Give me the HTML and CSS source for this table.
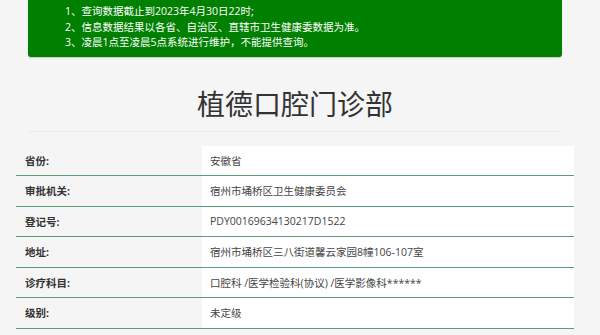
FILE: index.html
```html
<!DOCTYPE html>
<html lang="zh-CN">
<head>
<meta charset="utf-8">
<title>植德口腔门诊部</title>
<link rel="stylesheet" href="styles.css">
</head>
<body>
<div class="page">
  <div class="notice">
    <p>1、查询数据截止到2023年4月30日22时;</p>
    <p>2、信息数据结果以各省、自治区、直辖市卫生健康委数据为准。</p>
    <p>3、凌晨1点至凌晨5点系统进行维护，不能提供查询。</p>
  </div>
  <div class="title-wrap">
    <h1 class="title">植德口腔门诊部</h1>
  </div>
  <div class="info">
    <div class="row"><div class="label">省份:</div><div class="value">安徽省</div></div>
    <div class="row"><div class="label">审批机关:</div><div class="value">宿州市埇桥区卫生健康委员会</div></div>
    <div class="row"><div class="label">登记号:</div><div class="value">PDY00169634130217D1522</div></div>
    <div class="row"><div class="label">地址:</div><div class="value">宿州市埇桥区三八街道馨云家园8幢106-107室</div></div>
    <div class="row"><div class="label">诊疗科目:</div><div class="value">口腔科 /医学检验科(协议) /医学影像科******</div></div>
    <div class="row"><div class="label">级别:</div><div class="value">未定级</div></div>
  </div>
</div>
</body>
</html>
```
FILE: styles.css
```css
html, body {
  margin: 0;
  padding: 0;
  background: #f5f5f5;
  font-family: "Open Sans", "Noto Sans CJK SC", sans-serif;
  color: #333;
  overflow: hidden;
}
.page {
  width: 590px;
  height: 335px;
}
.notice {
  margin: 0 28px;
  background: #008000;
  color: #fff;
  padding: 4px 0 6px 37px;
  border-radius: 0 0 3px 3px;
  box-shadow: 0 1px 1px rgba(0,0,0,0.18);
  font-size: 10.5px;
}
.notice p {
  margin: 0;
  line-height: 15.5px;
}
.title-wrap {
  margin: 0 28px;
  padding-top: 26px;
  padding-bottom: 8px;
  border-bottom: 1px solid #ebebeb;
  text-align: center;
}
.title {
  margin: 0;
  font-size: 28px;
  font-weight: normal;
  line-height: 40px;
  color: #333;
  font-family: "Noto Sans CJK SC", sans-serif;
}
.info {
  margin: 14px 16px 0 16px;
}
.row {
  display: grid;
  grid-template-columns: 186px 1fr;
  height: 30.5px;
  box-sizing: border-box;
  border-bottom: 1px solid #5a9e76;
  font-size: 10.5px;
}
.label {
  display: flex;
  align-items: center;
  padding-left: 9px;
  font-weight: bold;
  color: #333;
}
.value {
  display: flex;
  align-items: center;
  padding-left: 8px;
  background: #fff;
  color: #444;
}
```
